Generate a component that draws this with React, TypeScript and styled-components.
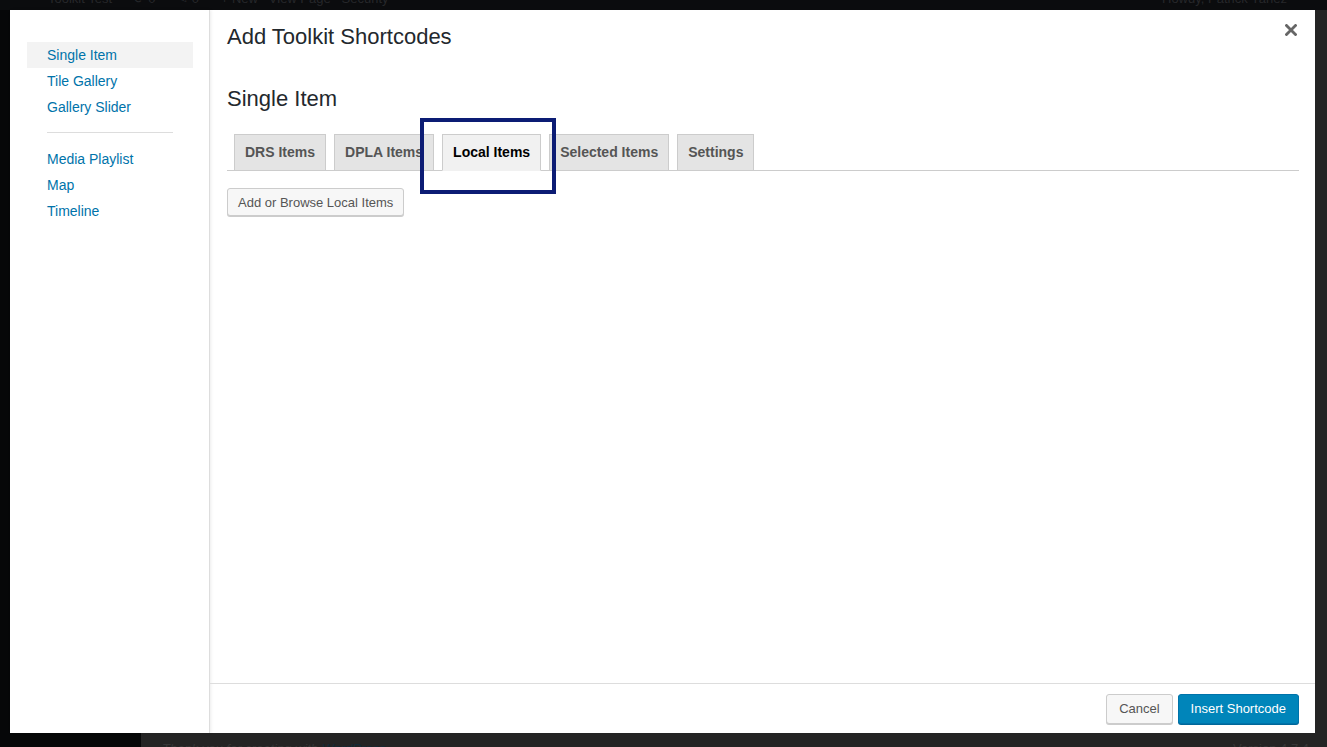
import styled, { createGlobalStyle } from "styled-components";

const GlobalStyle = createGlobalStyle`
    html, body {
        margin: 0;
        padding: 0;
        background: #060708;
    }

    * {
        box-sizing: border-box;
    }
`;

const Page = styled.div`
    position: relative;
    width: 100vw;
    height: 100vh;
    overflow: hidden;

    display: flex;
    flex-direction: column;

    font-family: "Liberation Sans", Arial, sans-serif;
`;

const AdminBar = styled.div`
    height: 10px;
    flex-shrink: 0;

    display: flex;
    justify-content: space-between;
    align-items: flex-start;

    padding: 0 40px 0 48px;

    background: #0b0c0e;
    overflow: hidden;
`;

const AdminBarText = styled.span`
    margin-top: -9px;

    font-size: 13px;
    line-height: 16px;
    color: #26272a;
    white-space: pre;
`;

const Backdrop = styled.div`
    flex: 1;

    display: flex;
`;

const AdminMenu = styled.div`
    width: 141px;
    flex-shrink: 0;

    background: #060708;
`;

const AdminContent = styled.div`
    flex: 1;

    display: flex;
    justify-content: space-between;
    align-items: flex-end;

    padding: 0 18px 0 21px;

    background: #242424;
`;

const AdminFooterText = styled.span<{ $italic?: boolean }>`
    margin-bottom: -12px;

    font-size: 13px;
    line-height: 20px;
    font-style: ${({ $italic }) => ($italic ? "italic" : "normal")};
    color: #363636;

    a {
        color: #122a38;
        text-decoration: none;
    }
`;

const Modal = styled.div`
    position: absolute;
    top: 10px;
    left: 10px;
    right: 12px;
    bottom: 14px;

    display: flex;

    background: #fff;
`;

const Sidebar = styled.div`
    width: 200px;
    flex-shrink: 0;

    padding: 32px 16px 0 17px;

    border-right: 1px solid #ddd;
    box-shadow: 1px 0 3px rgba(0, 0, 0, 0.08);
`;

const MenuList = styled.div`
    display: flex;
    flex-direction: column;
`;

const MenuItem = styled.a<{ $active?: boolean }>`
    display: block;

    height: 26px;
    padding-left: 20px;

    font-size: 14px;
    line-height: 26px;
    color: #0073aa;
    text-decoration: none;

    background: ${({ $active }) => ($active ? "#f3f3f3" : "transparent")};
`;

const Separator = styled.div`
    height: 1px;
    margin: 12px 20px 13px;

    background: #dddddd;
`;

const Main = styled.div`
    flex: 1;

    display: flex;
    flex-direction: column;
`;

const Header = styled.div`
    height: 52px;

    display: flex;
    justify-content: space-between;

    padding: 0 16px 0 17px;
`;

const Title = styled.h1`
    margin: 0;

    font-size: 22px;
    font-weight: 400;
    line-height: 54px;
    color: #23282d;
`;

const CloseButton = styled.button`
    align-self: flex-start;

    margin-top: 12px;
    padding: 0;

    width: 16px;
    height: 16px;

    display: flex;
    align-items: center;
    justify-content: center;

    background: none;
    border: none;
    cursor: pointer;
`;

const Body = styled.div`
    flex: 1;

    padding: 23px 16px 0 17px;
`;

const SectionTitle = styled.h2`
    margin: 0 0 21px;

    font-size: 22px;
    font-weight: 400;
    line-height: 28px;
    color: #23282d;
`;

const Tabs = styled.div`
    display: flex;
    gap: 8px;

    padding-left: 7px;

    border-bottom: 1px solid #ccc;
`;

const Tab = styled.button<{ $active?: boolean }>`
    height: 37px;
    margin-bottom: -1px;
    padding: 0 10px;

    font-family: inherit;
    font-size: 14px;
    font-weight: 700;
    line-height: 35px;
    color: ${({ $active }) => ($active ? "#000" : "#555")};

    background: ${({ $active }) => ($active ? "#f1f1f1" : "#e4e4e4")};
    border: 1px solid #ccc;
    border-bottom-color: ${({ $active }) => ($active ? "#f1f1f1" : "#ccc")};
`;

const SecondaryButton = styled.button`
    height: 28px;
    padding: 0 10px;

    font-family: inherit;
    font-size: 13px;
    color: #555;

    background: #f7f7f7;
    border: 1px solid #ccc;
    border-radius: 3px;
    box-shadow: 0 1px 0 #ccc;
`;

const BrowseButton = styled(SecondaryButton)`
    margin-top: 17px;
`;

const Footer = styled.div`
    height: 50px;

    display: flex;
    justify-content: flex-end;
    align-items: center;
    gap: 5px;

    padding: 0 16px;

    border-top: 1px solid #ddd;
`;

const FooterButton = styled(SecondaryButton)`
    height: 30px;
    padding: 0 12px;
`;

const PrimaryButton = styled.button`
    height: 30px;
    padding: 0 12px;

    font-family: inherit;
    font-size: 13px;
    color: #fff;

    background: #0085ba;
    border: 1px solid #0073aa;
    border-radius: 3px;
    box-shadow: 0 1px 0 #006799;
`;

const Highlight = styled.div`
    position: absolute;
    left: 420px;
    top: 118px;

    width: 136px;
    height: 76px;

    border: 4px solid #0c1c74;
    pointer-events: none;
`;

const menuTop = ["Single Item", "Tile Gallery", "Gallery Slider"];
const menuBottom = ["Media Playlist", "Map", "Timeline"];
const tabs = ["DRS Items", "DPLA Items", "Local Items", "Selected Items", "Settings"];

export default function App() {
    return (
        <>
            <GlobalStyle />

            <Page>

                <AdminBar>
                    <AdminBarText>{"Toolkit Test      ⟳ 0      ✎ 0      + New   View Page   Security"}</AdminBarText>
                    <AdminBarText>Howdy, Patrick Yanez</AdminBarText>
                </AdminBar>

                <Backdrop>
                    <AdminMenu />
                    <AdminContent>
                        <AdminFooterText $italic>
                            Thank you for creating with <a>WordPress</a>.
                        </AdminFooterText>
                        <AdminFooterText>Version 4.7.4</AdminFooterText>
                    </AdminContent>
                </Backdrop>

                <Modal>

                    <Sidebar>
                        <MenuList>
                            {menuTop.map((item, index) => (
                                <MenuItem key={item} $active={index === 0}>
                                    {item}
                                </MenuItem>
                            ))}
                        </MenuList>

                        <Separator />

                        <MenuList>
                            {menuBottom.map((item) => (
                                <MenuItem key={item}>{item}</MenuItem>
                            ))}
                        </MenuList>
                    </Sidebar>

                    <Main>

                        <Header>
                            <Title>Add Toolkit Shortcodes</Title>

                            <CloseButton aria-label="Close">
                                <svg width="12" height="12" viewBox="0 0 12 12">
                                    <path
                                        d="M1.5 1.5 L10.5 10.5 M10.5 1.5 L1.5 10.5"
                                        stroke="#666"
                                        strokeWidth="2.8"
                                        strokeLinecap="square"
                                    />
                                </svg>
                            </CloseButton>
                        </Header>

                        <Body>
                            <SectionTitle>Single Item</SectionTitle>

                            <Tabs>
                                {tabs.map((tab) => (
                                    <Tab key={tab} $active={tab === "Local Items"}>
                                        {tab}
                                    </Tab>
                                ))}
                            </Tabs>

                            <BrowseButton>Add or Browse Local Items</BrowseButton>
                        </Body>

                        <Footer>
                            <FooterButton>Cancel</FooterButton>
                            <PrimaryButton>Insert Shortcode</PrimaryButton>
                        </Footer>

                    </Main>

                </Modal>

                <Highlight />

            </Page>
        </>
    );
}
